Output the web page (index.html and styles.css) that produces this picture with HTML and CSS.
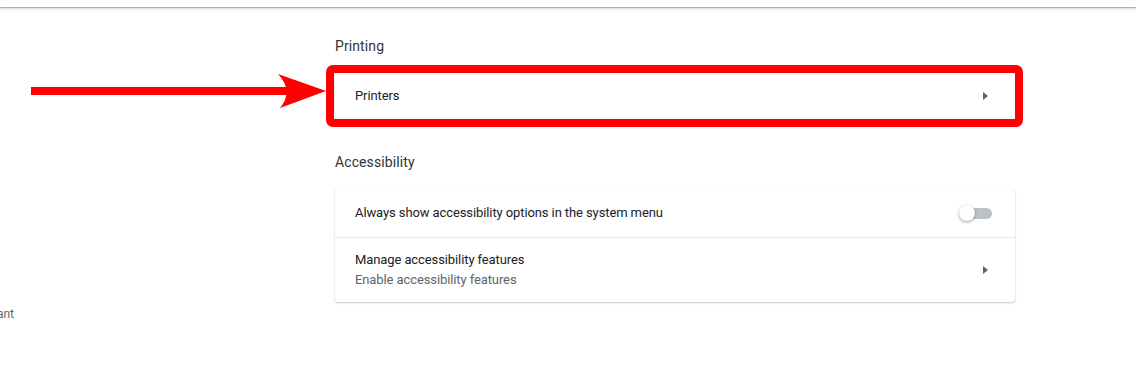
FILE: index.html
```html
<!DOCTYPE html>
<html>
<head>
  <meta charset="utf-8">
  <title>Settings - Advanced</title>
  <link rel="stylesheet" href="styles.css">
</head>
<body>

<div class="topbar"></div>

<div class="page">
  <div class="sidebar">
    <div class="nav-item"><span>Google Assistant</span></div>
  </div>

  <div class="main">
    <div class="section">
      <h2 class="section-title">Printing</h2>
      <div class="card">
        <div class="row">
          <div class="row-text">Printers</div>
          <svg class="subpage-arrow" width="5" height="8" viewBox="0 0 5 8"><path d="M0 0 L5 4 L0 8 Z"/></svg>
        </div>
      </div>
    </div>

    <div class="section">
      <h2 class="section-title">Accessibility</h2>
      <div class="card">
        <div class="row">
          <div class="row-text">Always show accessibility options in the system menu</div>
          <div class="toggle"><div class="knob"></div></div>
        </div>
        <div class="row two-line">
          <div class="row-text">
            <div>Manage accessibility features</div>
            <div class="secondary">Enable accessibility features</div>
          </div>
          <svg class="subpage-arrow" width="5" height="8" viewBox="0 0 5 8"><path d="M0 0 L5 4 L0 8 Z"/></svg>
        </div>
      </div>
    </div>
  </div>
</div>

<!-- annotation drawn over the screenshot -->
<div class="highlight"></div>
<svg class="pointer" width="340" height="60" viewBox="0 60 340 60">
  <rect x="31" y="87" width="262" height="8" fill="#f00"/>
  <path d="M278 74 L326 91 L280 108 Q294 91 278 74 Z" fill="#f00"/>
</svg>

</body>
</html>
```

FILE: styles.css
```css
body {
	margin: 0;
	background: #fff;
	font-family: Roboto, "Liberation Sans", sans-serif;
	font-size: 13px;
	color: #202124;
}

.topbar {
	height: 7px;
	background: #fff;
	position: relative;
	z-index: 1;
	box-shadow: 0 1px 1px rgba(0, 0, 0, 0.25), 0 2px 5px rgba(0, 0, 0, 0.12);
}

.page {
	display: flex;
}

.sidebar {
	width: 335px;
	flex-shrink: 0;
}

.nav-item {
	width: 14px;
	margin-top: 297px;
	line-height: 20px;
	display: flex;
	justify-content: flex-end;
	overflow: hidden;
	white-space: nowrap;
	color: #5f6368;
	font-size: 12px;
}

.main {
	width: 680px;
	padding-top: 29px;
}

.section + .section {
	margin-top: 32px;
}

.section-title {
	margin: 0;
	padding-bottom: 16px;
	font-size: 14px;
	font-weight: 400;
	line-height: 20px;
	color: #333;
	letter-spacing: 0.1px;
}

.section + .section .section-title {
	padding-bottom: 17px;
}

.card {
	background: #fff;
	border-radius: 3px;
	box-shadow: 0 1px 2px rgba(0, 0, 0, 0.22), 0 0 1px rgba(0, 0, 0, 0.12);
}

.row {
	display: flex;
	align-items: center;
	justify-content: space-between;
	min-height: 48px;
	padding: 0 23px 0 20px;
	line-height: 20px;
	letter-spacing: -0.1px;
}

.row + .row {
	border-top: 1px solid #e8eaed;
}

.row.two-line {
	min-height: 64px;
	padding-right: 27px;
}

.card > .row:first-child .subpage-arrow {
	margin-right: 4px;
}

.secondary {
	color: #5f6368;
}

.subpage-arrow {
	fill: #5f6368;
}

.toggle {
	position: relative;
	width: 30px;
	height: 11px;
	border-radius: 6px;
	background: #bdc1c6;
}

.knob {
	position: absolute;
	left: -3px;
	top: -3px;
	width: 16px;
	height: 16px;
	border-radius: 50%;
	background: #fff;
	box-shadow: 0 1px 3px rgba(0, 0, 0, 0.4);
}

.highlight {
	position: absolute;
	left: 326px;
	top: 65px;
	width: 681px;
	height: 46px;
	border: 8px solid #f00;
	border-radius: 7px;
}

.pointer {
	position: absolute;
	left: 0;
	top: 60px;
}
```
